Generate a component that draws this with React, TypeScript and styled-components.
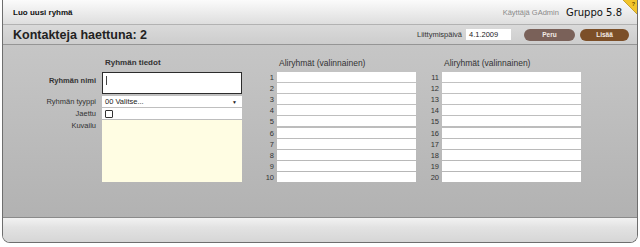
import styled, { createGlobalStyle } from 'styled-components';

const GlobalStyle = createGlobalStyle`
  html, body {
    margin: 0;
    padding: 0;
    background: #ffffff;
  }
  body {
    font-family: "Liberation Sans", Arial, sans-serif;
    color: #222;
  }
`;

const Frame = styled.div`
  width: 634px;
  height: 242px;
  margin-left: 2px;
  border: 1px solid #6e6e6e;
  border-top: none;
  border-radius: 0 0 8px 8px;
  overflow: hidden;
  display: flex;
  flex-direction: column;
  position: relative;
`;

const TitleBar = styled.div`
  height: 24px;
  flex: none;
  display: flex;
  align-items: center;
  padding: 0 15px 0 10px;
  background: linear-gradient(#fbfbfb, #dedede);
  border-bottom: 1px solid #b2b2b2;

  h1 {
    margin: 0;
    font-size: 8px;
    font-weight: 700;
    color: #111;
    flex: 1;
  }
`;

const User = styled.span`
  font-size: 7.5px;
  color: #8a8a8a;
  margin-right: 7px;
`;

const Version = styled.span`
  font-family: "DejaVu Sans", sans-serif;
  font-size: 10px;
  color: #111;
`;

const HelpCorner = styled.svg`
  position: absolute;
  z-index: 2;
  top: 0;
  right: 0;
  display: block;
`;

const Toolbar = styled.div`
  height: 19px;
  flex: none;
  display: flex;
  align-items: center;
  padding: 0 8px 0 10px;
  background: linear-gradient(#dadada, #cdcdcd);
  border-bottom: 1px solid #959595;

  h2 {
    margin: 0;
    flex: 1;
    font-size: 12.5px;
    font-weight: 700;
    color: #222;
  }
`;

const SmallLabel = styled.span`
  font-size: 7.5px;
  color: #333;
  margin-right: 4px;
`;

const DateInput = styled.div`
  width: 42px;
  height: 11px;
  padding-left: 3px;
  background: #fff;
  font-size: 7.5px;
  line-height: 11px;
  color: #222;
  margin-right: 8px;
`;

const PillButton = styled.button<{ $tone: string; $w: number }>`
  width: ${(p) => p.$w}px;
  height: 12px;
  margin-left: 5px;
  padding: 0;
  border: none;
  border-radius: 6px;
  background: ${(p) => p.$tone};
  color: #f4ece6;
  font-family: "Liberation Sans", Arial, sans-serif;
  font-size: 6.5px;
  font-weight: 700;
`;

const Main = styled.div`
  flex: 1;
  display: flex;
  align-items: flex-start;
  padding-top: 13px;
  background: linear-gradient(#c6c6c6, #b2b2b2);
  border-bottom: 1px solid #8a8a8a;
`;

const Form = styled.div`
  display: grid;
  grid-template-columns: 99px 140px;
  row-gap: 1px;
  margin-right: 15px;
`;

const Label = styled.div<{ $bold?: boolean }>`
  font-size: 7.5px;
  font-weight: ${(p) => (p.$bold ? 700 : 400)};
  color: #333;
  text-align: right;
  padding-right: 6px;
  align-self: start;
  line-height: ${(p) => (p.$bold ? '17px' : '11px')};
`;

const Heading = styled.div<{ $bold?: boolean }>`
  font-size: ${(p) => (p.$bold ? '8px' : '8.5px')};
  font-weight: ${(p) => (p.$bold ? 700 : 400)};
  color: #333;
  height: 13px;
  line-height: 10px;
  padding-left: ${(p) => (p.$bold ? '3px' : '2px')};
`;

const NameInput = styled.div`
  height: 20px;
  background: #fff;
  border: 1px solid #2c2c2c;
  margin-bottom: 1px;
  position: relative;

  &::after {
    content: '';
    position: absolute;
    left: 3px;
    top: 3px;
    width: 1px;
    height: 9px;
    background: #444;
  }
`;

const Select = styled.div`
  height: 11px;
  background: #fff;
  display: flex;
  align-items: center;
  justify-content: space-between;
  padding: 0 5px 0 3px;
  font-size: 7.5px;
  color: #222;

  i {
    font-style: normal;
    font-size: 5px;
  }
`;

const CheckRow = styled.div`
  height: 11px;
  background: #fff;
  display: flex;
  align-items: center;
  padding-left: 3px;

  span {
    width: 6px;
    height: 6px;
    border: 1px solid #333;
    border-radius: 1px;
  }
`;

const TextArea = styled.div`
  height: 62px;
  background: #fffde3;
`;

const SubGroup = styled.div<{ $gap: number }>`
  display: grid;
  grid-template-columns: 20px 139px;
  row-gap: 1.1px;
  margin-right: ${(p) => p.$gap}px;
`;

const Num = styled.div`
  font-size: 7.5px;
  color: #333;
  text-align: right;
  padding-right: 3px;
  line-height: 11px;
  height: 10px;
`;

const Field = styled.div`
  height: 10px;
  background: #fff;
`;

const Footer = styled.div`
  height: 24px;
  flex: none;
  background: linear-gradient(#f2f2f2, #e2e2e2 40%, #d6d6d6);
`;

function SubGroups({ start, gap }: { start: number; gap: number }) {
  const nums = Array.from({ length: 10 }, (_, i) => start + i);
  return (
    <SubGroup $gap={gap}>
      <div />
      <Heading>Aliryhmät (valinnainen)</Heading>
      {nums.map((n) => [<Num key={`n${n}`}>{n}</Num>, <Field key={`f${n}`} />])}
    </SubGroup>
  );
}

export default function App() {
  return (
    <>
      <GlobalStyle />
      <Frame>
        <TitleBar>
          <h1>Luo uusi ryhmä</h1>
          <User>Käyttäjä GAdmin</User>
          <Version>Gruppo 5.8</Version>
        </TitleBar>
        <HelpCorner width="14" height="14" viewBox="0 0 14 14">
          <polygon points="0,0 14,0 14,14" fill="#f2c52c" />
          <line x1="0" y1="0" x2="14" y2="14" stroke="#b99320" strokeWidth="0.8" />
          <text x="10.5" y="6" fontSize="5.5" fontWeight="700" fill="#6b4d00" fontFamily="Liberation Sans, sans-serif" textAnchor="middle">?</text>
        </HelpCorner>
        <Toolbar>
          <h2>Kontakteja haettuna: 2</h2>
          <SmallLabel>Liittymispäivä</SmallLabel>
          <DateInput>4.1.2009</DateInput>
          <PillButton $tone="#7a6159" $w={51}>Peru</PillButton>
          <PillButton $tone="#7c4f28" $w={49}>Lisää</PillButton>
        </Toolbar>
        <Main>
          <Form>
            <div />
            <Heading $bold>Ryhmän tiedot</Heading>
            <Label $bold>Ryhmän nimi</Label>
            <NameInput />
            <Label>Ryhmän tyyppi</Label>
            <Select>
              00 Valitse...
              <i>▼</i>
            </Select>
            <Label>Jaettu</Label>
            <CheckRow>
              <span />
            </CheckRow>
            <Label>Kuvailu</Label>
            <TextArea />
          </Form>
          <SubGroups start={1} gap={6} />
          <SubGroups start={11} gap={0} />
        </Main>
        <Footer />
      </Frame>
    </>
  );
}
